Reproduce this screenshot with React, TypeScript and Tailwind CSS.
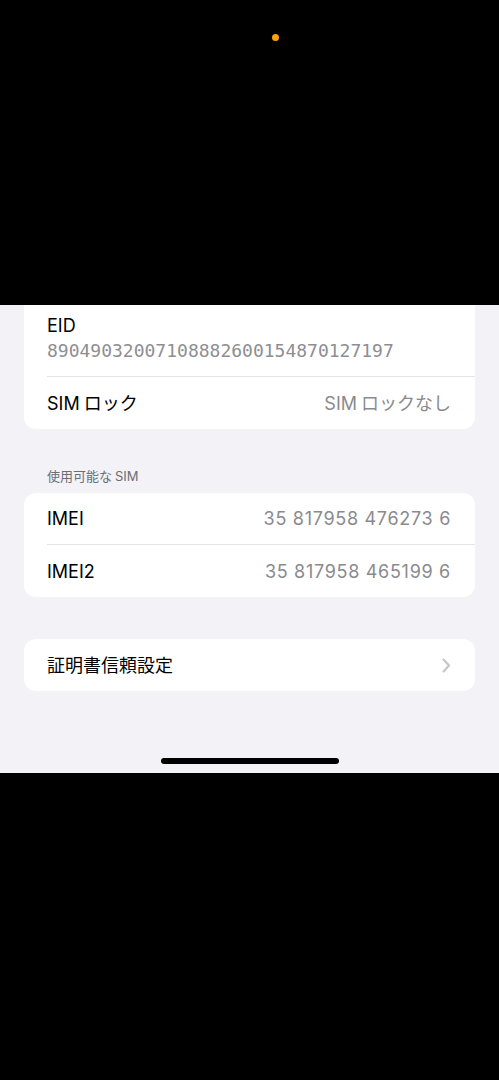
import React from 'react';

const font = { fontFamily: 'Inter, "Noto Sans CJK JP", sans-serif' };

function Row({ label, value, last, mono }: { label: React.ReactNode; value: React.ReactNode; last?: boolean; mono?: boolean }) {
  return (
    <div className="pl-[23px]">
      <div className={`h-[52px] flex items-center justify-between pr-[24px] ${last ? '' : 'border-b border-[#e3e3e8]'}`}>
        <span className="text-[18px] text-black">{label}</span>
        <span className={`text-[18px] text-[#8a8a8e] ${mono ? 'tracking-[0.7px]' : ''}`}>{value}</span>
      </div>
    </div>
  );
}

export default function App() {
  return (
    <div className="w-[499px] h-[1080px] bg-black flex flex-col" style={font}>
      <div className="h-[305px] pt-[34px] pl-[272px]">
        <div className="w-[7px] h-[7px] rounded-full bg-[#ff9f0a]" />
      </div>

      <div className="h-[468px] bg-[#f2f2f7] px-6 flex flex-col">
        <div className="bg-white rounded-b-[12px]">
          <div className="pl-[23px]">
            <div className="pt-[10px] pb-[11px] border-b border-[#e3e3e8]">
              <div className="text-[18px] leading-[22px] text-black">EID</div>
              <div
                className="text-[18px] leading-[28px] text-[#8e8e92]"
                style={{ fontFamily: '"DejaVu Sans Mono", monospace' }}
              >
                89049032007108882600154870127197
              </div>
            </div>
          </div>
          <Row
            label={<>SIM<span className="ml-[4px]">ロック</span></>}
            value={<>SIM<span className="ml-[4px]">ロックなし</span></>}
            last
          />
        </div>

        <div className="mt-[38px] pl-[23px] text-[13px] leading-[18px] text-[#6d6d72]">
          使用可能な<span className="ml-[3px]">SIM</span>
        </div>

        <div className="mt-[8px] bg-white rounded-[12px]">
          <Row label="IMEI" value="35 817958 476273 6" mono />
          <Row label="IMEI2" value="35 817958 465199 6" mono last />
        </div>

        <div className="mt-[42px] bg-white rounded-[12px] h-[52px] pl-[23px] pr-[24px] flex items-center justify-between">
          <span className="text-[18px] text-black">証明書信頼設定</span>
          <svg width="9" height="15" viewBox="0 0 9 15" fill="none">
            <path d="M1.5 1.5L7 7.5L1.5 13.5" stroke="#c4c4c7" strokeWidth="2" strokeLinecap="round" strokeLinejoin="round" />
          </svg>
        </div>

        <div className="flex-1 flex items-end justify-center pb-[9px]">
          <div className="w-[178px] h-[6px] rounded-full bg-black" />
        </div>
      </div>
    </div>
  );
}
